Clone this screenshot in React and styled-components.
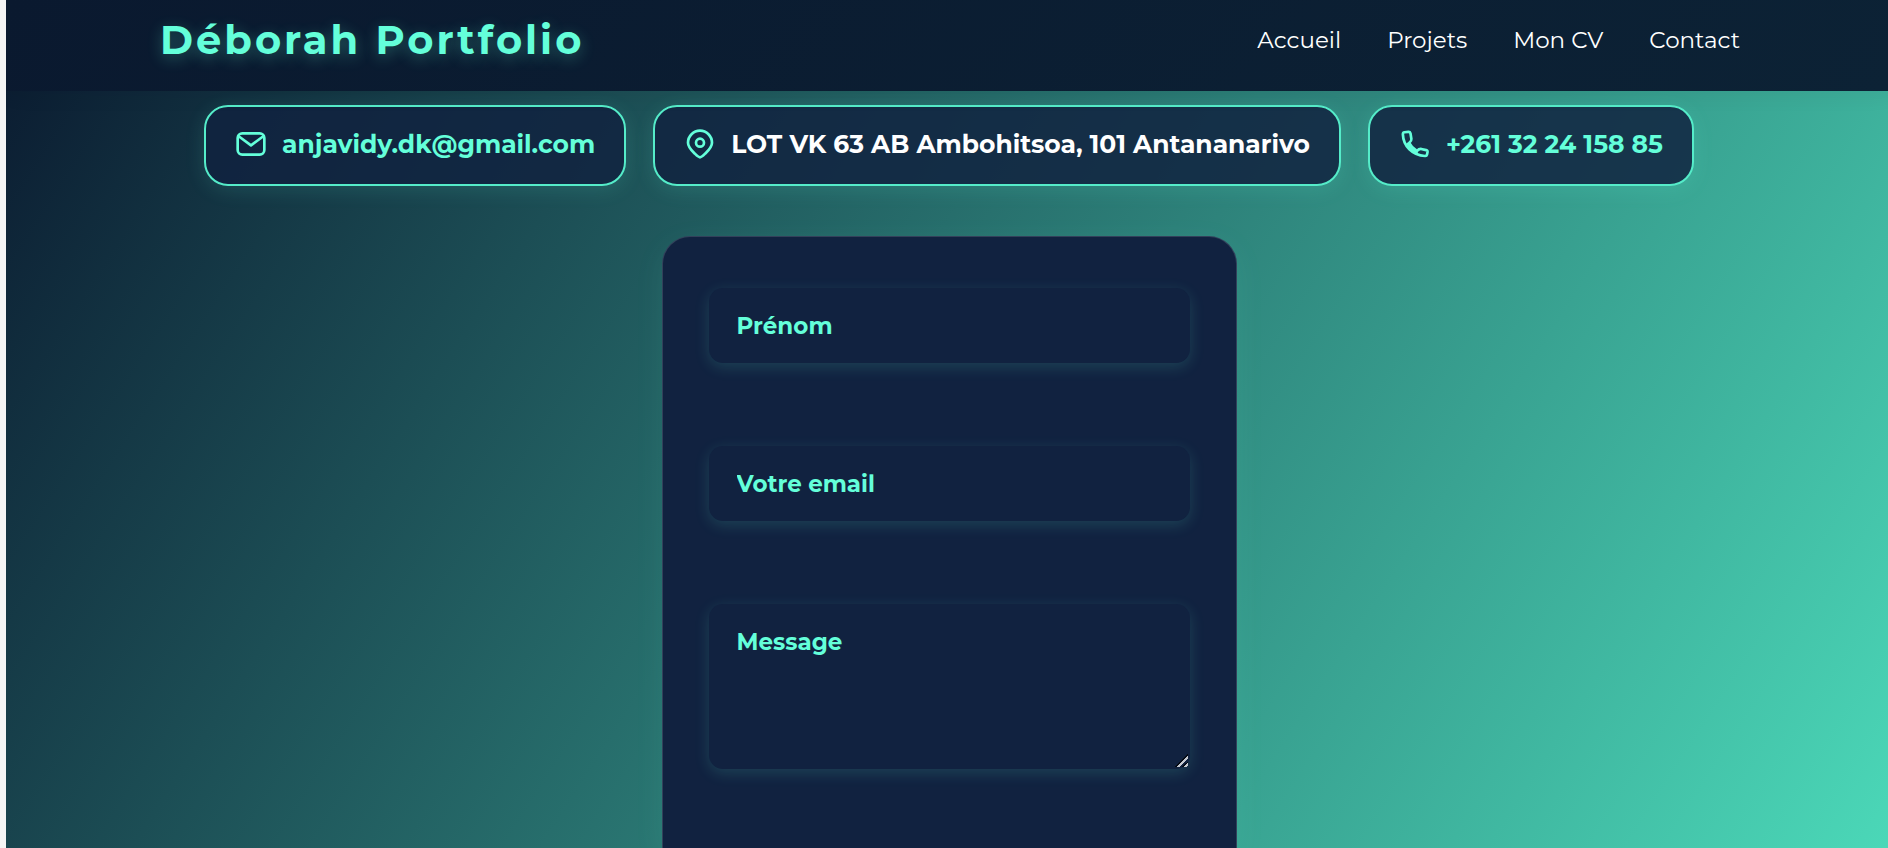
import React from "react";
import styled, { createGlobalStyle } from "styled-components";

const ACCENT = "#64ffda";

const GlobalStyle = createGlobalStyle`
  * { box-sizing: border-box; }
  html { background: #f5f5f5; }
  body {
    margin: 0;
    overflow: hidden;
    color: #fff;
    font-family: Montserrat, Inter, "Open Sans", sans-serif;
  }
`;

const Page = styled.div`
  display: flex;
  flex-direction: column;
  width: 100%;
  height: 100vh;
  margin-left: 6px;
  overflow: hidden;
  background: linear-gradient(123deg, #0a192f 0%, #4bd8b8 100%);
`;

const Header = styled.header`
  position: relative;
  z-index: 1;
  display: flex;
  flex: none;
  align-items: center;
  justify-content: space-between;
  height: 91px;
  padding: 0 154px 11px;
  background: linear-gradient(135deg, #0a192f 0%, #0c2235 100%);
  box-shadow: 0 4px 20px rgba(0, 0, 0, 0.06);
`;

const Logo = styled.h1`
  margin: 0;
  color: ${ACCENT};
  font-size: 40px;
  font-weight: 700;
  line-height: 48px;
  letter-spacing: 3px;
  text-shadow: 0 4px 15px rgba(100, 255, 218, 0.3);
`;

const Nav = styled.nav`
  display: flex;
  gap: 46px;
`;

const NavLink = styled.a`
  color: #fff;
  font-size: 23px;
  line-height: 32px;
  text-decoration: none;
`;

const Main = styled.main`
  display: flex;
  flex: 1;
  flex-direction: column;
  align-items: center;
  gap: 50px;
  padding: 14px 2px 0 0;
`;

const ContactBar = styled.address`
  display: flex;
  justify-content: center;
  gap: 27px;
  font-style: normal;
`;

const ContactCard = styled.div`
  display: flex;
  align-items: center;
  gap: 15px;
  height: 81px;
  padding: 0 29px 3px;
  border: 2px solid #55ecc9;
  border-radius: 24px;
  background: rgba(17, 34, 64, 0.85);
  box-shadow: 0 4px 20px rgba(100, 255, 218, 0.13);
`;

const Icon = styled.svg`
  flex: none;
  width: 32px;
  height: 32px;
  fill: none;
  stroke: ${ACCENT};
  stroke-width: 2;
  stroke-linecap: round;
  stroke-linejoin: round;
`;

const ContactText = styled.span`
  color: #fff;
  font-size: 25px;
  font-weight: 700;
  line-height: 32px;
  white-space: nowrap;
`;

const ContactLink = styled(ContactText)`
  color: ${ACCENT};
  text-decoration: none;
`;

const Form = styled.form`
  display: flex;
  flex: 1;
  flex-direction: column;
  gap: 83px;
  width: 575px;
  padding: 51px 46px;
  border: 1px solid rgba(255, 255, 255, 0.14);
  border-bottom: 0;
  border-radius: 28px 28px 0 0;
  background: #112240;
  box-shadow: 0 8px 30px rgba(100, 255, 218, 0.08);
`;

const Field = styled.input`
  display: block;
  width: 100%;
  height: ${(p) => (p.$tall ? "165px" : "75px")};
  padding: 20px 26px;
  border: 2px solid transparent;
  border-radius: 14px;
  outline: none;
  background: #112240;
  color: ${ACCENT};
  font-family: inherit;
  font-size: 23px;
  font-weight: 700;
  line-height: 32px;
  box-shadow: 0 4px 15px rgba(100, 255, 218, 0.15);

  &::placeholder {
    color: ${ACCENT};
    opacity: 1;
  }

  &::-webkit-resizer {
    background: linear-gradient(
      135deg,
      transparent 54%,
      #050a14 54% 62%,
      #c4c8d0 62% 72%,
      transparent 72% 80%,
      #050a14 80% 84%,
      #c4c8d0 84% 94%,
      transparent 94%
    );
  }
`;

const links = ["Accueil", "Projets", "Mon CV", "Contact"];

function MailIcon() {
  return (
    <Icon viewBox="0 0 24 24" aria-hidden="true">
      <rect x="2" y="4" width="20" height="16" rx="3.5" />
      <path d="M2.500 6l9.500 7 9.500-7" />
    </Icon>
  );
}

function PinIcon() {
  return (
    <Icon viewBox="0 0 24 24" aria-hidden="true">
      <path d="M12 22c-1.200 0-2.500-1.400-4-2.900C5.600 16.700 3 14.300 3 11a9 9 0 0 1 18 0c0 3.300-2.600 5.700-5 8.100-1.500 1.500-2.800 2.900-4 2.900z" />
      <circle cx="12" cy="11" r="3" />
    </Icon>
  );
}

function PhoneIcon() {
  return (
    <Icon viewBox="0 0 24 24" aria-hidden="true">
      <path d="M4 3.200L7 2.900C8 2.800 8.400 3.300 8.600 4L9.300 8.200C9.500 9.500 9 10 7.600 11.200C9 14 11 15.800 13.400 17.200C14.800 15.800 15.600 15.600 16.600 15.700L20.400 16.600C21.200 16.800 21.500 17.200 21.400 18L21 20C20.800 20.800 20.300 21.100 19.500 21C10 20.500 3.200 13.500 2.900 4.800C2.900 3.800 3.200 3.300 4 3.200z" />
      <path d="M6.600 12C8 14.800 10.500 17 13.200 18.200" />
    </Icon>
  );
}

export default function App() {
  return (
    <>
      <GlobalStyle />
      <Page>
        <Header>
          <Logo>Déborah Portfolio</Logo>
          <Nav>
            {links.map((name) => (
              <NavLink key={name} href="#">{name}</NavLink>
            ))}
          </Nav>
        </Header>
        <Main>
          <ContactBar>
            <ContactCard>
              <MailIcon />
              <ContactLink as="a" href="mailto:anjavidy.dk@gmail.com">anjavidy.dk@gmail.com</ContactLink>
            </ContactCard>
            <ContactCard>
              <PinIcon />
              <ContactText>LOT VK 63 AB Ambohitsoa, 101 Antananarivo</ContactText>
            </ContactCard>
            <ContactCard>
              <PhoneIcon />
              <ContactLink as="a" href="tel:+261322415885">+261 32 24 158 85</ContactLink>
            </ContactCard>
          </ContactBar>
          <Form>
            <Field type="text" placeholder="Prénom" aria-label="Prénom" />
            <Field type="email" placeholder="Votre email" aria-label="Votre email" />
            <Field as="textarea" $tall placeholder="Message" aria-label="Message" />
          </Form>
        </Main>
      </Page>
    </>
  );
}
